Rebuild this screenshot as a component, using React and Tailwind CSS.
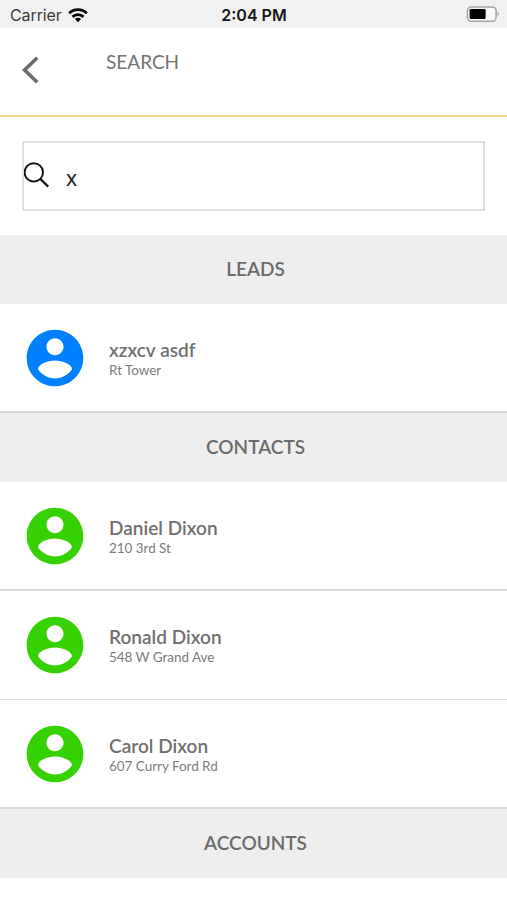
const statusFont = "font-['Inter','Liberation_Sans',sans-serif]";

function StatusBar() {
  return (
    <div className={`grid h-7 grid-cols-[1fr_auto_1fr] items-center bg-[#f1f1f1] pl-[10px] pr-[8px] pt-px ${statusFont}`}>
      <div className="flex items-center gap-[6px]">
        <span className="text-[16px] leading-5 tracking-[-0.1px] text-[#3c3c3c]">Carrier</span>
        <svg width="20" height="16" viewBox="0 0 20 16" fill="none" stroke="#080808" strokeWidth="2.9">
          <path d="M1.2 6.2a12.5 12.5 0 0 1 17.6 0" />
          <path d="M4.5 9.9a7.8 7.8 0 0 1 11 0" />
          <path d="M10 15.2 6.9 12.1a4.4 4.4 0 0 1 6.2 0Z" fill="#080808" stroke="none" />
        </svg>
      </div>
      <span className="-ml-px text-[16px] font-semibold leading-5 text-[#161616]">2:04 PM</span>
      <svg width="33" height="16" viewBox="0 0 33 16" className="-mt-px justify-self-end">
        <rect x="1.4" y="0.9" width="28.7" height="14.4" rx="4" fill="#f7f7f7" stroke="#a6a6a6" strokeWidth="1.5" />
        <rect x="3.6" y="3" width="16" height="10" rx="1.2" fill="#000" />
        <path d="M31.5 6c1.8.7 1.8 3.4 0 4.1Z" fill="#a6a6a6" />
      </svg>
    </div>
  );
}

function SectionTitle({ children }) {
  return (
    <h2 className="flex h-[69px] items-center justify-center bg-[#eeeeee] pb-0.5 pl-1 text-[19px] font-semibold leading-6 text-[#6b6b6b]">
      {children}
    </h2>
  );
}

function Person({ name, detail, color, line = "border-b-2 border-[#dadada]" }) {
  return (
    <li className={`flex h-[109px] items-center pl-[21px] ${line}`}>
      <svg width="68" height="68" viewBox="0 0 24 24" className={color} fill="currentColor">
        <path d="M12 2C6.48 2 2 6.48 2 12s4.48 10 10 10 10-4.48 10-10S17.52 2 12 2zm0 3c1.66 0 3 1.34 3 3s-1.34 3-3 3-3-1.34-3-3 1.34-3 3-3zm0 14.2c-2.5 0-4.71-1.28-6-3.22.03-1.99 4-3.08 6-3.08 1.99 0 5.97 1.09 6 3.08-1.29 1.94-3.5 3.22-6 3.22z" />
      </svg>
      <div className="flex flex-col pl-5 pt-0.5">
        <span className="text-[19px] font-semibold leading-[22px] tracking-[0.03px] text-[#6f6f6f]">{name}</span>
        <span className="text-[13.5px] leading-[18px] tracking-[-0.04px] text-[#7c7c7c]">{detail}</span>
      </div>
    </li>
  );
}

export default function App() {
  return (
    <div className="h-[900px] w-full overflow-hidden bg-white font-['Lato',sans-serif]">
      <StatusBar />
      <header className="flex h-[89px] border-b-2 border-[#f8d594] pl-[22px]">
        <svg width="17" height="28" viewBox="0 0 17 28" className="mt-7" fill="none" stroke="#6b6b6b" strokeWidth="3.6">
          <path d="M15.2 1.8 2.6 14l12.6 12.2" />
        </svg>
        <h1 className="ml-[67px] mt-[22px] text-[19px] leading-6 text-[#737373]">SEARCH</h1>
      </header>
      <div className="px-[22px] pb-6 pt-6">
        <div className="flex h-[70px] items-start border-2 border-[#dfdfdf]">
          <svg width="26" height="26" viewBox="0 0 26 26" className="mt-[19px]" fill="none" stroke="#161616" strokeWidth="2">
            <circle cx="9.8" cy="10.4" r="9.2" />
            <path d="M16.2 16.7 24.2 24.6" strokeWidth="2.3" />
          </svg>
          <span className="ml-4 mt-[23px] font-['Noto_Sans',sans-serif] text-[21px] leading-6 text-[#222]">x</span>
        </div>
      </div>
      <SectionTitle>LEADS</SectionTitle>
      <ul>
        <Person name="xzxcv asdf" detail="Rt Tower" color="text-[#0080ff]" />
      </ul>
      <SectionTitle>CONTACTS</SectionTitle>
      <ul>
        <Person name="Daniel Dixon" detail="210 3rd St" color="text-[#36d100]" />
        <Person name="Ronald Dixon" detail="548 W Grand Ave" color="text-[#36d100]" line="border-b border-[#dddddd]" />
        <Person name="Carol Dixon" detail="607 Curry Ford Rd" color="text-[#36d100]" />
      </ul>
      <SectionTitle>ACCOUNTS</SectionTitle>
    </div>
  );
}
